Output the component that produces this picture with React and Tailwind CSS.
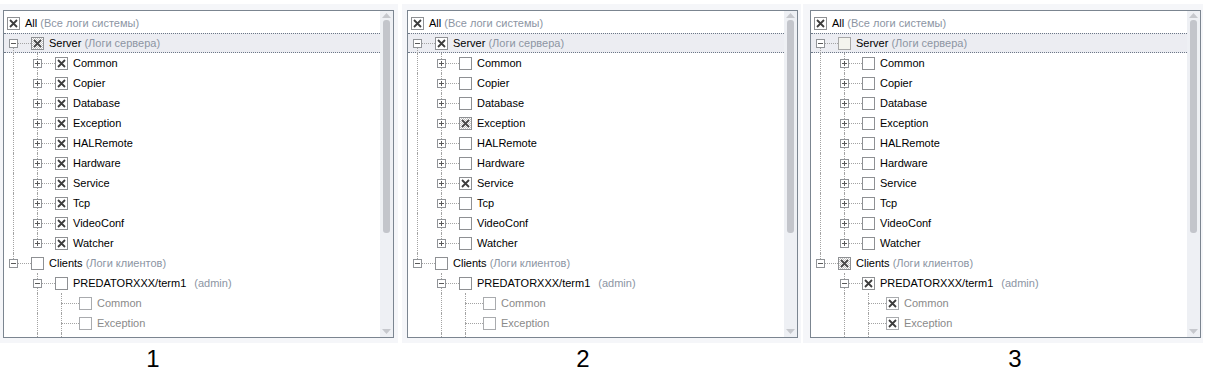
const LINE = 'border-dotted border-[#a3a3a3]'

const ROWS = [
  { id: 'all', level: 0, label: 'All', sub: '(Все логи системы)' },
  { id: 'server', level: 1, exp: '-', anc: [], top: false, bottom: true, label: 'Server', sub: '(Логи сервера)', focus: true },
  { id: 'common', level: 2, exp: '+', anc: [true], top: true, bottom: true, label: 'Common' },
  { id: 'copier', level: 2, exp: '+', anc: [true], top: true, bottom: true, label: 'Copier' },
  { id: 'database', level: 2, exp: '+', anc: [true], top: true, bottom: true, label: 'Database' },
  { id: 'exception', level: 2, exp: '+', anc: [true], top: true, bottom: true, label: 'Exception' },
  { id: 'halremote', level: 2, exp: '+', anc: [true], top: true, bottom: true, label: 'HALRemote' },
  { id: 'hardware', level: 2, exp: '+', anc: [true], top: true, bottom: true, label: 'Hardware' },
  { id: 'service', level: 2, exp: '+', anc: [true], top: true, bottom: true, label: 'Service' },
  { id: 'tcp', level: 2, exp: '+', anc: [true], top: true, bottom: true, label: 'Tcp' },
  { id: 'videoconf', level: 2, exp: '+', anc: [true], top: true, bottom: true, label: 'VideoConf' },
  { id: 'watcher', level: 2, exp: '+', anc: [true], top: true, bottom: false, label: 'Watcher' },
  { id: 'clients', level: 1, exp: '-', anc: [], top: true, bottom: false, label: 'Clients', sub: '(Логи клиентов)' },
  { id: 'pred', level: 2, exp: '-', anc: [false], top: true, bottom: true, label: 'PREDATORXXX/term1', sub: '(admin)', wide: true },
  { id: 'c-common', level: 3, anc: [false, true], top: true, bottom: true, label: 'Common', dim: true },
  { id: 'c-exception', level: 3, anc: [false, true], top: true, bottom: true, label: 'Exception', dim: true },
  // only the connector lines of the next row peek in under the last visible item
  { id: 'c-next', level: 3, anc: [false, true], top: true, bottom: true, linesOnly: true },
]

const PANELS = [
  {
    n: '1',
    checks: {
      all: 'on', server: 'mixed', common: 'on', copier: 'on', database: 'on', exception: 'on',
      halremote: 'on', hardware: 'on', service: 'on', tcp: 'on', videoconf: 'on', watcher: 'on',
    },
  },
  {
    n: '2',
    checks: { all: 'on', server: 'on', exception: 'mixed', service: 'on' },
  },
  {
    n: '3',
    checks: { all: 'on', server: 'grayoff', clients: 'mixed', pred: 'on', 'c-common': 'on', 'c-exception': 'on' },
  },
]

const Check = ({ state = 'off', dim }) => {
  let box = 'border-[#8e9093] bg-white'
  if (dim) box = 'border-[#a9abae] bg-white'
  if (state === 'mixed') box = 'border-[#8e9093] bg-[repeating-conic-gradient(#c4c4c4_0%_25%,#ffffff_0%_50%)] bg-[length:2px_2px]'
  if (state === 'grayoff') box = 'border-[#a8a8a8] bg-[#f4f4ee]'

  return (
    <span className={`flex h-[13px] w-[13px] shrink-0 items-center justify-center border ${box}`}>
      {state === 'on' || state === 'mixed' ? (
        <svg width="11" height="11" viewBox="0 0 11 11">
          <path d="M2 2L9 9M9 2L2 9" stroke={state === 'mixed' ? '#4a4a4a' : '#3d3d3d'} strokeWidth="1.8" />
        </svg>
      ) : null}
    </span>
  )
}

const Expander = ({ sign }) => (
  <span className="absolute left-[5px] top-[6px] flex h-[9px] w-[9px] items-center justify-center border border-[#919498] bg-white">
    <svg width="7" height="7" viewBox="0 0 7 7">
      <path d="M1 3.5H6" stroke="#5a5a5a" strokeWidth="1" />
      {sign === '+' ? <path d="M3.5 1V6" stroke="#5a5a5a" strokeWidth="1" /> : null}
    </svg>
  </span>
)

const TreeRow = ({ row, state }) => {
  return (
    <div className={`relative flex h-[20px] shrink-0 items-center ${row.focus ? 'bg-[#ecedf2]' : ''}`}>
      {row.focus ? (
        <>
          <span className="absolute inset-x-0 top-0 border-t border-dotted border-[#6c7787]" />
          <span className="absolute inset-x-0 bottom-0 border-t border-dotted border-[#6c7787]" />
        </>
      ) : null}

      {row.level === 0 ? <div className="w-[3px] shrink-0" /> : null}

      {row.level > 0
        ? row.anc.map((on, i) => (
            <div key={i} className="relative h-full w-[24px] shrink-0">
              {on ? <span className={`absolute left-[9px] top-0 h-full border-l ${LINE}`} /> : null}
            </div>
          ))
        : null}

      {row.level > 0 ? (
        <div className="relative h-full w-[24px] shrink-0">
          {row.top ? <span className={`absolute left-[9px] top-0 h-[10px] border-l ${LINE}`} /> : null}
          {row.bottom ? <span className={`absolute left-[9px] top-[10px] bottom-0 border-l ${LINE}`} /> : null}
          {row.linesOnly ? null : <span className={`absolute left-[10px] right-[-3px] top-[10px] border-t ${LINE}`} />}
          {row.exp ? <Expander sign={row.exp} /> : null}
        </div>
      ) : null}

      {row.linesOnly ? null : (
        <>
          <div className={row.level > 0 ? 'ml-[3px]' : ''}>
            <Check state={state} dim={row.dim} />
          </div>

          <span className={`ml-[5px] whitespace-nowrap text-[11px] leading-[20px] ${row.dim ? 'text-[#8a8a8a]' : 'text-black'}`}>
            {row.label}
          </span>
          {row.sub ? (
            <span className={`${row.wide ? 'ml-[8px]' : 'ml-[3px]'} whitespace-nowrap text-[11px] leading-[20px] text-[#8c95a3]`}>
              {row.sub}
            </span>
          ) : null}
        </>
      )}
    </div>
  )
}

const ScrollBar = () => (
  <div className="flex w-[13px] shrink-0 flex-col items-center bg-[#eef0f4]">
    <svg className="mt-[2px]" width="9" height="5" viewBox="0 0 9 5">
      <path d="M0 5L4.5 0L9 5Z" fill="#c6c8cd" />
    </svg>
    <div className="mt-[2px] h-[213px] w-[7px] rounded-[3px] bg-[#c3c5cb]" />
    <div className="flex-1" />
    <svg className="mb-[3px]" width="9" height="5" viewBox="0 0 9 5">
      <path d="M0 0L9 0L4.5 5Z" fill="#c6c8cd" />
    </svg>
  </div>
)

const Panel = ({ checks }) => (
  <div className="flex h-[328px] w-[391px] border border-[#7b8590] bg-white">
    <div className="flex flex-1 flex-col overflow-hidden pt-[2px]">
      {ROWS.map((row) => (
        <TreeRow key={row.id} row={row} state={checks[row.id] || 'off'} />
      ))}
    </div>
    <ScrollBar />
  </div>
)

export default function App() {
  return (
    <div className="h-[378px] w-[1207px] overflow-hidden bg-white font-['Liberation_Sans',Arial,sans-serif]">
      <div className="flex pt-[4px]">
        <div className="w-[398px] bg-[#f5f6f9] pb-[5px] pl-[3px] pt-[6px]">
          <Panel checks={PANELS[0].checks} />
        </div>
        <div className="ml-[4px] w-[399px] bg-[#f5f6f9] pb-[5px] pl-[5px] pt-[6px]">
          <Panel checks={PANELS[1].checks} />
        </div>
        <div className="ml-[2px] w-[400px] bg-[#f5f6f9] pb-[5px] pl-[7px] pt-[6px]">
          <Panel checks={PANELS[2].checks} />
        </div>
      </div>

      <div className="flex pt-[2px] text-[24px] leading-[28px] text-black">
        <span className="ml-[133px] w-[40px] text-center">1</span>
        <span className="ml-[390px] w-[40px] text-center">2</span>
        <span className="ml-[392px] w-[40px] text-center">3</span>
      </div>
    </div>
  )
}
